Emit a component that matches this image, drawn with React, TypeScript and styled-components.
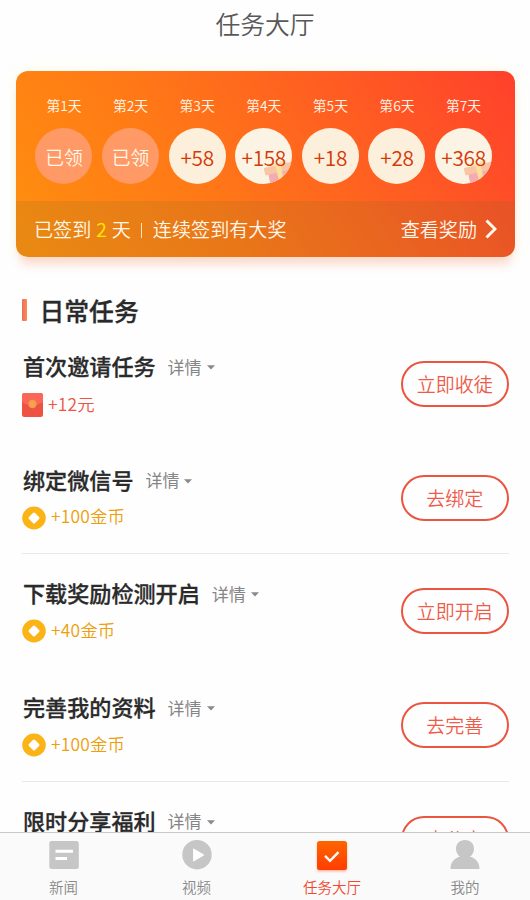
import React from "react";
import styled, { createGlobalStyle } from "styled-components";

const GlobalStyle = createGlobalStyle`
  * { box-sizing: border-box; }
  body {
    margin: 0;
    background: #fefefe;
    font-family: "Noto Sans CJK SC", sans-serif;
    font-weight: 350;
    overflow: hidden;
  }
`;

const Screen = styled.div`
  width: 530px;
  height: 900px;
  display: flex;
  flex-direction: column;
  overflow: hidden;
`;

const Header = styled.header`
  height: 71px;
  flex: none;
  padding-top: 5px;
  text-align: center;
  font-size: 24.8px;
  line-height: 36px;
  color: #585858;
`;

const Card = styled.section`
  flex: none;
  width: 499px;
  height: 186px;
  margin-left: 16px;
  display: flex;
  flex-direction: column;
  border-radius: 12px;
  overflow: hidden;
  color: #fff8ec;
  background: linear-gradient(55deg, #ff900e 0%, #ff7a16 35%, #ff5c22 70%, #ff402c 100%);
  box-shadow: 0 11px 10px -3px rgba(250, 90, 50, 0.2), 0 0 14px rgba(240, 240, 190, 0.35);
`;

const Days = styled.div`
  height: 130px;
  padding: 24px 0 0 14.7px;
  display: grid;
  grid-template-columns: repeat(7, 66.6px);
  align-content: start;
`;

const Day = styled.div`
  display: flex;
  flex-direction: column;
  align-items: center;
`;

const DayLabel = styled.span`
  height: 20px;
  margin-bottom: 13px;
  font-size: 13.8px;
  line-height: 20px;
`;

const Bubble = styled.div<{ $kind: "done" | "plain" | "gift" }>`
  position: relative;
  width: 57px;
  height: 56px;
  border-radius: 50%;
  overflow: hidden;
  display: flex;
  align-items: center;
  justify-content: center;
  font-size: ${(p) => (p.$kind === "done" ? "18.8px" : "20.8px")};
  letter-spacing: ${(p) => (p.$kind === "done" ? "0" : "-0.3px")};
  color: ${(p) => (p.$kind === "done" ? "#fff8ec" : "#d43a08")};
  background: ${(p) =>
    p.$kind === "done" ? "#ff9a66" : p.$kind === "gift" ? "#fbf4e4" : "#fcefdb"};
`;

const BubbleText = styled.span`
  position: relative;
  line-height: 28px;
  margin-top: 1px;
`;

const GiftIcon = styled.svg`
  position: absolute;
  left: 29px;
  top: 32px;
  width: 28px;
  height: 26px;
`;

const CardFooter = styled.div`
  height: 56px;
  padding: 0 18px;
  display: flex;
  align-items: center;
  justify-content: space-between;
  font-size: 19.1px;
  line-height: 28px;
  background: rgba(110, 105, 40, 0.15);
`;

const FooterText = styled.div`
  display: flex;
  align-items: center;
`;

const DayCount = styled.span`
  margin: 0 5px;
  color: #ffe800;
`;

const Bar = styled.span`
  width: 1px;
  height: 15px;
  margin: 3px 11px 0 10px;
  background: #ffe2c0;
`;

const MoreLink = styled.div`
  display: flex;
  align-items: center;
  gap: 8px;
`;

const SectionTitle = styled.h2`
  flex: none;
  height: 36px;
  margin: 35px 0 0 22px;
  display: flex;
  align-items: center;
  gap: 12.5px;
  font-size: 24.8px;
  line-height: 36px;
  font-weight: 500;
  -webkit-text-stroke: 0.3px #2a2a2a;
  color: #2a2a2a;

  &::before {
    content: "";
    width: 5px;
    height: 22px;
    border-radius: 1px;
    background: linear-gradient(90deg, #e8705c, #ff8a54);
  }
`;

const TaskList = styled.main`
  flex: 1;
  min-height: 0;
  padding: 0 21px 0 22px;
  margin-top: -1px;
  overflow: hidden;
`;

const TaskRow = styled.article<{ $divider: boolean }>`
  height: 113.7px;
  display: flex;
  justify-content: space-between;
  padding-top: 22px;
  border-bottom: 1px solid ${(p) => (p.$divider ? "#e9e9e9" : "transparent")};
`;

const TaskHeading = styled.div`
  height: 32px;
  display: flex;
  align-items: center;
`;

const TaskName = styled.h3`
  margin: 0 0 0 1px;
  font-size: 22.1px;
  line-height: 32px;
  font-weight: 500;
  -webkit-text-stroke: 0.3px #2a2a2a;
  color: #2a2a2a;
`;

const Details = styled.span`
  margin: 3px 5px 0 12px;
  font-size: 17px;
  line-height: 24px;
  font-weight: 400;
  color: #858585;
`;

const CaretIcon = styled.svg`
  margin-top: 5px;
`;

const Reward = styled.div<{ $cash: boolean }>`
  height: 26px;
  margin-top: ${(p) => (p.$cash ? "11px" : "10px")};
  display: flex;
  align-items: center;
  gap: 5px;
  font-size: 17.4px;
  letter-spacing: 0.2px;
  line-height: 26px;
  color: ${(p) => (p.$cash ? "#ee5542" : "#ed9e0c")};
`;

const RewardText = styled.span`
  margin-top: -3px;
`;

const ActionButton = styled.button`
  flex: none;
  width: 108.5px;
  height: 46px;
  margin-top: 12px;
  padding: 0;
  border: 2px solid #ea5540;
  border-radius: 23px;
  background: transparent;
  font: inherit;
  font-size: 19px;
  line-height: 28px;
  color: #ee5b4b;
`;

const TabBar = styled.nav`
  flex: none;
  height: 68px;
  display: grid;
  grid-template-columns: 127px 139px 132px 134px;
  border-top: 1px solid #c9c9c9;
  background: #fafafa;
`;

const Tab = styled.div<{ $active?: boolean }>`
  display: flex;
  flex-direction: column;
  align-items: center;
  padding-top: 7px;
  font-size: 14.5px;
  line-height: 20px;
  color: ${(p) => (p.$active ? "#f0492f" : "#888")};
`;

const TabLabel = styled.span`
  margin-top: 7px;
`;

const Gift = () => (
  <GiftIcon viewBox="0 0 28 26">
    <g transform="rotate(-13 14 12)">
      <rect x="4" y="11" width="24" height="18" fill="#f3acb0" />
      <rect x="1" y="5" width="28" height="7.500" fill="#fac5a4" />
      <rect x="13" y="5" width="5" height="24" fill="#fbdf9c" />
      <path d="M15 6C8 6 7 3 10 2c3 0 5 2 5 4zm1 0c7 0 9-3 5-4-3 0-5 2-5 4z" fill="#fbe0a5" />
    </g>
  </GiftIcon>
);

const EnvelopeIcon = () => (
  <svg width="21" height="24" viewBox="0 0 21 24">
    <rect width="21" height="24" rx="2.5" fill="#ee5341" />
    <path d="M0 9V2.500A2.500 2.500 0 0 1 2.500 0h16A2.500 2.500 0 0 1 21 2.500V9C17 13 4 13 0 9z" fill="#fb6757" />
    <circle cx="10.500" cy="11" r="4.200" fill="#f79b51" />
    <circle cx="10.500" cy="11" r="2" fill="#f3a74d" />
  </svg>
);

const CoinIcon = () => (
  <svg width="24" height="24" viewBox="0 0 24 24">
    <ellipse cx="12" cy="12" rx="11.800" ry="11.400" fill="#fbb416" />
    <rect x="7.700" y="7.700" width="8.600" height="8.600" rx="1.500" transform="rotate(45 12 12)" fill="#fff" />
  </svg>
);

const Caret = () => (
  <CaretIcon width="8" height="5" viewBox="0 0 8 5">
    <path d="M0 .3h8L4 4.600z" fill="#8a8a8a" />
  </CaretIcon>
);

const NewsIcon = () => (
  <svg width="30" height="30" viewBox="0 0 30 30">
    <rect x=".3" y="1" width="29.500" height="28" rx="2.500" fill="#c6c6c6" />
    <path d="M6.500 11.300H24M6.500 18.600H18" stroke="#fff" strokeWidth="3" fill="none" />
  </svg>
);

const VideoIcon = () => (
  <svg width="30" height="30" viewBox="0 0 30 30">
    <circle cx="15" cy="14.700" r="14.700" fill="#c6c6c6" />
    <path d="M11.700 9.200v11.600L21.500 15z" fill="#fff" stroke="#fff" strokeWidth="1.200" strokeLinejoin="round" />
  </svg>
);

const CheckIcon = () => (
  <svg width="34" height="30" viewBox="0 0 34 30" overflow="visible">
    <defs>
      <linearGradient id="check-fill" x1="0" y1="0" x2="0" y2="1">
        <stop offset="0" stopColor="#ff6506" />
        <stop offset="1" stopColor="#ff3d02" />
      </linearGradient>
      <filter id="check-shadow" x="-20%" y="-20%" width="140%" height="150%">
        <feDropShadow dx="0" dy="1.500" stdDeviation="1.200" floodColor="#ff7040" floodOpacity=".5" />
      </filter>
    </defs>
    <rect x="2" y="1" width="30" height="29" rx="2.500" fill="url(#check-fill)" filter="url(#check-shadow)" />
    <path d="M10 15.800l5 5 8.500-8.600" fill="none" stroke="#fff" strokeWidth="2.400" />
  </svg>
);

const ProfileIcon = () => (
  <svg width="30" height="30" viewBox="0 0 30 30">
    <path
      d="M15 0C9.500 0 6 3.800 6 8.800c0 3.400 1.500 6.200 4 8C4.500 18 .8 22.300.5 28c0 .7.300 1 1 1h27c.7 0 1-.3 1-1-.3-5.700-4-10-9.500-11.200 2.500-1.800 4-4.600 4-8C24 3.800 20.500 0 15 0z"
      fill="#c6c6c6"
    />
  </svg>
);

const days: { label: string; value: string; kind: "done" | "plain" | "gift" }[] = [
  { label: "第1天", value: "已领", kind: "done" },
  { label: "第2天", value: "已领", kind: "done" },
  { label: "第3天", value: "+58", kind: "plain" },
  { label: "第4天", value: "+158", kind: "gift" },
  { label: "第5天", value: "+18", kind: "plain" },
  { label: "第6天", value: "+28", kind: "plain" },
  { label: "第7天", value: "+368", kind: "gift" },
];

const tasks = [
  { name: "首次邀请任务", reward: "+12元", cash: true, action: "立即收徒" },
  { name: "绑定微信号", reward: "+100金币", cash: false, action: "去绑定" },
  { name: "下载奖励检测开启", reward: "+40金币", cash: false, action: "立即开启" },
  { name: "完善我的资料", reward: "+100金币", cash: false, action: "去完善" },
  { name: "限时分享福利", reward: "", cash: false, action: "去分享" },
];

export default function App() {
  return (
    <Screen>
      <GlobalStyle />
      <Header>任务大厅</Header>

      <Card>
        <Days>
          {days.map((d) => (
            <Day key={d.label}>
              <DayLabel>{d.label}</DayLabel>
              <Bubble $kind={d.kind}>
                {d.kind === "gift" && <Gift />}
                <BubbleText>{d.value}</BubbleText>
              </Bubble>
            </Day>
          ))}
        </Days>
        <CardFooter>
          <FooterText>
            已签到<DayCount>2</DayCount>天<Bar />连续签到有大奖
          </FooterText>
          <MoreLink>
            查看奖励
            <svg width="12" height="20" viewBox="0 0 12 20">
              <path d="M1.500 1.500L10 10l-8.500 8.500" fill="none" stroke="#fff8ec" strokeWidth="3" />
            </svg>
          </MoreLink>
        </CardFooter>
      </Card>

      <SectionTitle>日常任务</SectionTitle>

      <TaskList>
        {tasks.map((t, i) => (
          <TaskRow key={t.name} $divider={i % 2 === 1}>
            <div>
              <TaskHeading>
                <TaskName>{t.name}</TaskName>
                <Details>详情</Details>
                <Caret />
              </TaskHeading>
              {t.reward && (
                <Reward $cash={t.cash}>
                  {t.cash ? <EnvelopeIcon /> : <CoinIcon />}
                  <RewardText>{t.reward}</RewardText>
                </Reward>
              )}
            </div>
            <ActionButton>{t.action}</ActionButton>
          </TaskRow>
        ))}
      </TaskList>

      <TabBar>
        <Tab>
          <NewsIcon />
          <TabLabel>新闻</TabLabel>
        </Tab>
        <Tab>
          <VideoIcon />
          <TabLabel>视频</TabLabel>
        </Tab>
        <Tab $active>
          <CheckIcon />
          <TabLabel>任务大厅</TabLabel>
        </Tab>
        <Tab>
          <ProfileIcon />
          <TabLabel>我的</TabLabel>
        </Tab>
      </TabBar>
    </Screen>
  );
}
